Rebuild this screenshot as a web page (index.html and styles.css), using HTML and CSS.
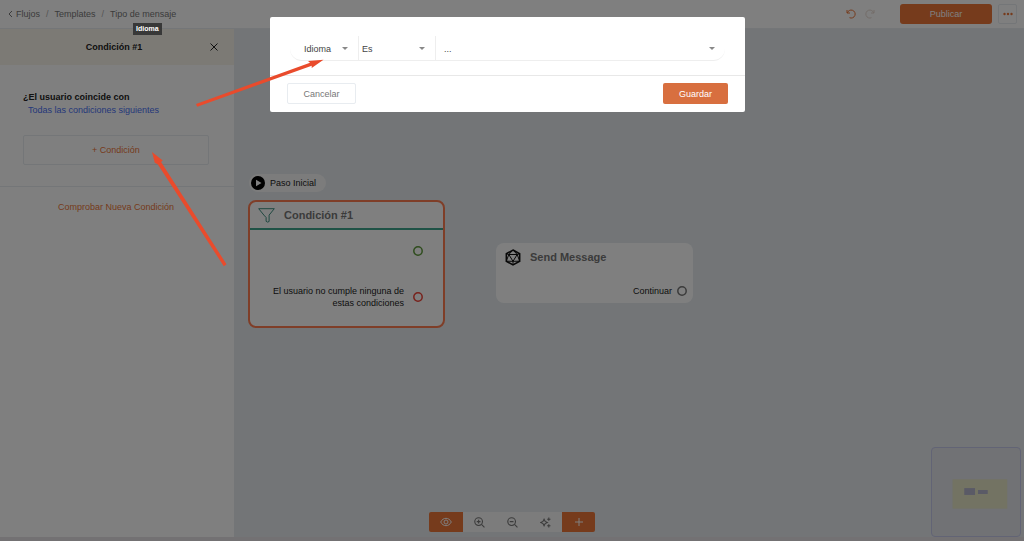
FILE: index.html
```html
<!DOCTYPE html>
<html lang="es">
<head>
    <meta charset="UTF-8">
    <meta name="viewport" content="width=device-width, initial-scale=1.0">
    <title>Tipo de mensaje</title>
    <link rel="stylesheet" href="styles.css">
</head>
<body>
    <header class="topbar">
        <nav class="breadcrumb">
            <a href="#" class="back">
                <svg width="5" height="8" viewBox="0 0 5 8"><path d="M4 1L1 4l3 3"/></svg>
                Flujos
            </a>
            <span class="separator">/</span>
            <a href="#">Templates</a>
            <span class="separator">/</span>
            <a href="#">Tipo de mensaje</a>
        </nav>
        <div class="history">
            <button type="button" class="icon-button" aria-label="Deshacer">
                <svg width="10" height="10" viewBox="0 0 10 10"><path d="M1 1v3h3M1.300 4A4 4 0 1 1 3.500 8.700"/></svg>
            </button>
            <button type="button" class="icon-button disabled" aria-label="Rehacer">
                <svg width="10" height="10" viewBox="0 0 10 10"><path d="M9 1v3H6M8.700 4A4 4 0 1 0 6.500 8.700"/></svg>
            </button>
        </div>
        <button type="button" class="publish">Publicar</button>
        <button type="button" class="more" aria-label="Más">
            <svg width="10" height="4" viewBox="0 0 10 4"><circle cx="1.500" cy="2" r="1.200"/><circle cx="5" cy="2" r="1.200"/><circle cx="8.500" cy="2" r="1.200"/></svg>
        </button>
    </header>

    <main class="editor">
        <aside class="sidebar">
            <div class="sidebar-header">
                <h2>Condición #1</h2>
                <button type="button" class="icon-button close" aria-label="Cerrar">
                    <svg width="8" height="8" viewBox="0 0 8 8"><path d="M.5.5l7 7M7.500.5l-7 7"/></svg>
                </button>
            </div>
            <div class="conditions">
                <p class="question">¿El usuario coincide con</p>
                <a href="#" class="match-link">Todas las condiciones siguientes</a>
                <button type="button" class="add-condition">+ Condición</button>
            </div>
            <div class="sidebar-footer">
                <a href="#">Comprobar Nueva Condición</a>
            </div>
        </aside>

        <section class="canvas">
            <div class="start-step">
                <svg width="14" height="14" viewBox="0 0 14 14"><circle cx="7" cy="7" r="7" fill="#000"/><path d="M5 3.800v6.400L10.500 7z" fill="#fff"/></svg>
                <span>Paso Inicial</span>
            </div>

            <article class="node node-condition">
                <h3 class="node-title">
                    <svg width="17" height="15" viewBox="0 0 17 15" class="funnel"><path d="M.7.7h15.600l-5.200 6.400v6.400q-1.600 1.300-3-.2V9.500L5.900 7.100z"/></svg>
                    Condición #1
                </h3>
                <div class="output output-empty">
                    <svg class="port port-yes" width="10" height="10" viewBox="0 0 10 10"><circle cx="5" cy="5" r="4.200"/></svg>
                </div>
                <div class="output">
                    <p>El usuario no cumple ninguna de estas condiciones</p>
                    <svg class="port port-no" width="10" height="10" viewBox="0 0 10 10"><circle cx="5" cy="5" r="4.200"/></svg>
                </div>
            </article>

            <article class="node node-message">
                <h3 class="node-title">
                    <svg width="16" height="17" viewBox="0 0 16 17" class="polyhedron"><path d="M8 1l6.700 3.800v7.400L8 16l-6.700-3.800V4.800z" stroke-width="1.500"/><path d="M3.800 5.500h8.400L8 12.300zM8 1L3.800 5.500 1.300 12.200 8 12.300l6.700-.1-2.500-6.700zM1.300 4.800l2.500.7M14.700 4.800l-2.500.7M8 12.300V16"/></svg>
                    Send Message
                </h3>
                <div class="output">
                    <p>Continuar</p>
                    <svg class="port" width="10" height="10" viewBox="0 0 10 10"><circle cx="5" cy="5" r="4.200"/></svg>
                </div>
            </article>

            <svg class="minimap" width="90" height="90" viewBox="0 0 90 90">
                <rect x="21" y="32" width="56" height="30" fill="#e6e6c6"/>
                <rect x="33" y="41" width="11" height="7" fill="#b4b4cc"/>
                <rect x="47" y="43" width="10" height="4" fill="#b4b4cc"/>
            </svg>
        </section>

        <div class="toolbar">
            <button type="button" class="active" aria-label="Vista">
                <svg width="12" height="10" viewBox="0 0 12 10"><path d="M.7 5C3 .1 9 .1 11.300 5 9 9.900 3 9.900.7 5z"/><circle cx="6" cy="5" r="2"/></svg>
            </button>
            <button type="button" aria-label="Acercar">
                <svg width="11" height="11" viewBox="0 0 10 10"><circle cx="4.200" cy="4.200" r="3.500"/><path d="M6.800 6.800L9.500 9.500M2.500 4.200h3.400M4.200 2.500v3.400"/></svg>
            </button>
            <button type="button" aria-label="Alejar">
                <svg width="11" height="11" viewBox="0 0 10 10"><circle cx="4.200" cy="4.200" r="3.500"/><path d="M6.800 6.800L9.500 9.500M2.500 4.200h3.400"/></svg>
            </button>
            <button type="button" aria-label="Ordenar">
                <svg width="11" height="11" viewBox="0 0 10 10"><path d="M3.700 2l1 2 2 1-2 1-1 2-1-2-2-1 2-1zM8 .5v3M6.500 2h3M8 6.500v3M6.500 8h3"/></svg>
            </button>
            <button type="button" class="active" aria-label="Añadir">
                <svg width="8" height="8" viewBox="0 0 8 8"><path d="M4 0v8M0 4h8"/></svg>
            </button>
        </div>
    </main>

    <div class="overlay">
        <form class="modal" role="dialog" aria-label="Condición">
            <div class="modal-body">
                <div class="filter">
                    <div class="select select-field">
                        <select aria-label="Campo"><option>Idioma</option></select>
                    </div>
                    <div class="select select-operator">
                        <select aria-label="Operador"><option>Es</option></select>
                    </div>
                    <div class="select select-value">
                        <select aria-label="Valor"><option>...</option></select>
                    </div>
                </div>
            </div>
            <div class="modal-footer">
                <button type="button" class="cancel">Cancelar</button>
                <button type="button" class="save">Guardar</button>
            </div>
        </form>
    </div>

    <div class="tooltip" role="tooltip">Idioma</div>

    <svg class="arrows" width="140" height="220" viewBox="0 0 140 220">
        <path d="M6 54l114-41.300-2-1.700 15.500-1.300-11.800 8.300v-2.200L7.200 56.800z"/>
        <path d="M33.800 216.300L-32.300 114.200l-2.900-1.500L-38 102l10.700 8.500-1.600 1.600L36.500 214.300z"/>
    </svg>
</body>
</html>
```

FILE: styles.css
```css
:root {
    --primary-color: #ec7638;
    --save-color: #d86f3f;
    --link-color: #4a70f4;
    --canvas-color: #e6ebef;
    --border-color: #e8ecf0;
    --text-color: #222;
    --muted-color: #777;
}
* {
    margin: 0;
    padding: 0;
    box-sizing: border-box;
}
body {
    font-family: "Liberation Sans", Arial, Helvetica, sans-serif;
    font-size: 9px;
    line-height: 12px;
    color: var(--text-color);
    background-color: #e6e2e6;
    display: flex;
    flex-direction: column;
    min-height: 100vh;
    padding-bottom: 4px;
}
a {
    color: inherit;
    text-decoration: none;
}
button,
select {
    font: inherit;
    cursor: pointer;
}
svg {
    display: block;
    fill: none;
    stroke: currentColor;
}

/* Top bar */
.topbar {
    display: flex;
    align-items: center;
    height: 29px;
    padding: 0 7px 0 8px;
    background-color: white;
    border-bottom: 1px solid var(--border-color);
}
.breadcrumb {
    display: flex;
    align-items: center;
    gap: 6px;
    color: var(--muted-color);
}
.back {
    display: flex;
    align-items: center;
    gap: 3px;
}
.separator {
    color: #aaa;
}
.history {
    display: flex;
    gap: 9px;
    margin-left: auto;
    margin-right: 25px;
}
.icon-button {
    border: none;
    background: none;
    color: var(--primary-color);
}
.disabled {
    color: #e6d8d0;
}
.publish {
    width: 92px;
    height: 20px;
    border: none;
    border-radius: 3px;
    background-color: var(--primary-color);
    color: white;
}
.more {
    display: flex;
    align-items: center;
    justify-content: center;
    width: 19px;
    height: 20px;
    margin-left: 6px;
    border: 1px solid var(--border-color);
    border-radius: 2px;
    background-color: white;
    color: var(--primary-color);
}
.more svg {
    fill: currentColor;
    stroke: none;
}

/* Sidebar */
.editor {
    position: relative;
    flex: 1;
    display: flex;
}
.sidebar {
    width: 234px;
    background-color: white;
}
.sidebar-header {
    display: flex;
    align-items: center;
    height: 36px;
    padding: 0 12px 0 22px;
    background-color: #f8f5eb;
}
.sidebar-header h2 {
    flex: 1;
    font-size: 9px;
    text-align: center;
}
.close {
    display: flex;
    justify-content: center;
    width: 16px;
    color: #222;
}
.conditions {
    padding: 26px 25px 21px 23px;
    border-bottom: 1px solid var(--border-color);
}
.question {
    font-weight: bold;
    margin-bottom: 1px;
}
.match-link {
    display: block;
    padding-left: 5px;
    color: var(--link-color);
}
.add-condition {
    width: 100%;
    height: 30px;
    margin-top: 19px;
    border: 1px solid var(--border-color);
    border-radius: 2px;
    background-color: white;
    color: var(--primary-color);
}
.sidebar-footer {
    padding: 14px 2px 0 0;
    text-align: center;
    color: var(--primary-color);
}

/* Canvas */
.canvas {
    position: relative;
    flex: 1;
    background-color: var(--canvas-color);
}
.start-step {
    position: absolute;
    left: 15px;
    top: 145px;
    display: flex;
    align-items: center;
    gap: 5px;
    height: 18px;
    padding: 0 10px 0 2px;
    border-radius: 9px;
    background-color: #f8f8f8;
}
.start-step svg {
    stroke: none;
}
.node {
    position: absolute;
    width: 197px;
    border-radius: 8px;
    background-color: white;
}
.node-title {
    display: flex;
    align-items: center;
    gap: 9px;
    height: 28px;
    padding-left: 9px;
    font-size: 11px;
    color: var(--muted-color);
}
.node-condition {
    left: 14px;
    top: 171px;
    padding-bottom: 17px;
    border: 2px solid #ff7c50;
}
.node-condition .node-title {
    padding-left: 8px;
    border-bottom: 2px solid #3fa58c;
}
.node-message {
    left: 262px;
    top: 214px;
    padding-bottom: 6px;
}
.funnel {
    color: #3f8f80;
}
.polyhedron {
    color: #111;
}
.output {
    display: flex;
    align-items: center;
    justify-content: flex-end;
    gap: 9px;
    padding-right: 20px;
}
.output p {
    width: 140px;
    text-align: right;
}
.output-empty {
    height: 42px;
    margin-bottom: 13px;
}
.node-message .output {
    gap: 5px;
    margin-top: 14px;
    padding-right: 6px;
}
.port {
    color: #777;
    stroke-width: 1.5;
}
.port-yes {
    color: #5f9a3c;
}
.port-no {
    color: #f04438;
}
.minimap {
    position: absolute;
    right: 3px;
    bottom: 0;
    border: 1px solid #c4c8ea;
    border-radius: 4px;
    background-color: #e2e4ea;
    stroke: none;
}
.toolbar {
    position: absolute;
    left: 50%;
    bottom: 5px;
    transform: translateX(-50%);
    display: flex;
    border-radius: 2px;
    overflow: hidden;
}
.toolbar button {
    display: flex;
    align-items: center;
    justify-content: center;
    width: 33px;
    height: 20px;
    border: none;
    background-color: #f8f8f8;
    color: var(--muted-color);
}
.toolbar .active {
    background-color: var(--primary-color);
    color: white;
}
.toolbar .active:first-child {
    width: 34px;
}

/* Modal */
.overlay {
    position: fixed;
    inset: 0;
    display: flex;
    align-items: flex-start;
    justify-content: center;
    padding: 17px 9px 0 0;
    background-color: rgba(0, 0, 0, 0.5);
}
.modal {
    width: 475px;
    border-radius: 2px;
    background-color: white;
    color: #555;
}
.modal-body {
    padding: 19px 20px 14px;
    border-bottom: 1px solid #e8e8e8;
}
.filter {
    display: flex;
    height: 25px;
    border-bottom: 1px solid #eee;
    border-radius: 12px;
}
.select {
    position: relative;
    border-right: 1px solid #eee;
}
.select::after {
    content: "";
    position: absolute;
    right: 10px;
    top: 11px;
    border: 3px solid transparent;
    border-top-color: #888;
    border-bottom: none;
    pointer-events: none;
}
.select select {
    width: 100%;
    height: 100%;
    padding-top: 2px;
    border: none;
    background: none;
    appearance: none;
    color: #444;
}
.select-field {
    width: 69px;
}
.select-field select {
    padding-left: 14px;
}
.select-operator {
    width: 77px;
}
.select-operator select {
    padding-left: 3px;
}
.select-value {
    flex: 1;
    border-right: none;
}
.select-value select {
    padding-left: 8px;
}
.modal-footer {
    display: flex;
    justify-content: space-between;
    padding: 7px 17px 8px;
}
.modal-footer button {
    height: 21px;
    border: 1px solid var(--border-color);
    border-radius: 2px;
}
.cancel {
    width: 69px;
    background-color: white;
    color: var(--muted-color);
}
.modal-footer .save {
    width: 65px;
    border: none;
    background-color: var(--save-color);
    color: white;
}

/* Guides drawn over the page */
.tooltip {
    position: absolute;
    left: 133px;
    top: 23px;
    padding: 1px 3px;
    background-color: #383838;
    color: white;
    font-size: 7px;
    font-weight: bold;
    line-height: 10px;
}
.arrows {
    position: absolute;
    left: 190px;
    top: 50px;
    overflow: visible;
    fill: #e94b2c;
    stroke: none;
    pointer-events: none;
}
```
